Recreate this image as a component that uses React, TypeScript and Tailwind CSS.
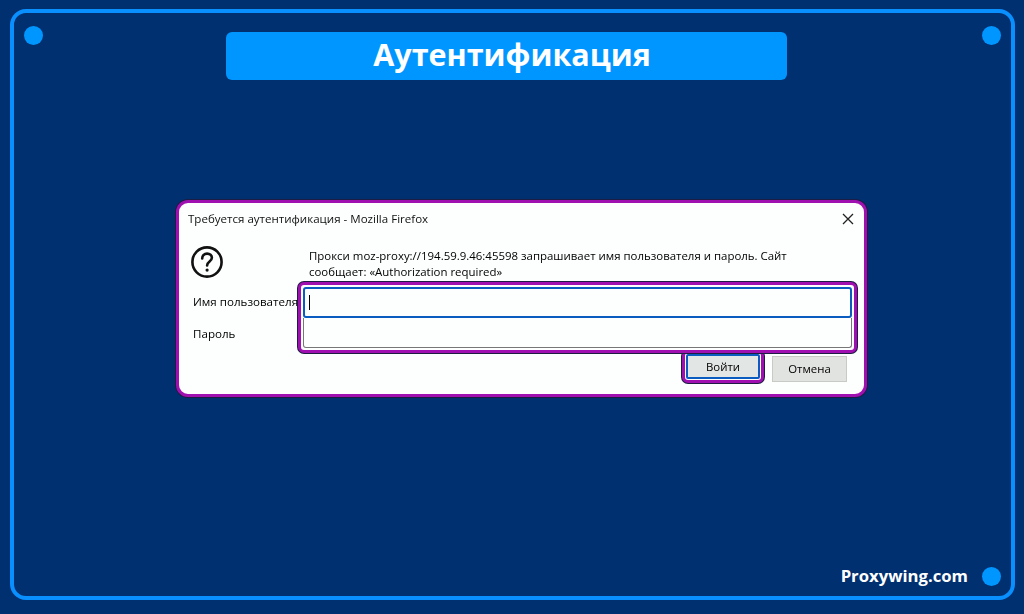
const font = { fontFamily: '"Open Sans", "Noto Sans", sans-serif' };

function Dot() {
  return <span className="block w-[19px] h-[19px] rounded-full bg-[#0096ff] shrink-0" />;
}

function QuestionIcon() {
  return (
    <svg width="34" height="34" viewBox="0 0 34 34" fill="none" stroke="#111" strokeWidth="2.6" strokeLinecap="round">
      <circle cx="17" cy="17" r="14.6" />
      <path d="M12.2 13.4c0-3 2.1-4.8 4.9-4.8s4.8 1.8 4.8 4.2c0 3.6-4.8 3.7-4.8 7.6" fill="none" />
      <path d="M17.1 25v.1" strokeWidth="3.2" />
    </svg>
  );
}

function CloseIcon() {
  return (
    <svg width="12" height="12" viewBox="0 0 12 12" stroke="#222" strokeWidth="1.3" fill="none">
      <path d="M1 1l10 10M11 1L1 11" />
    </svg>
  );
}

export default function App() {
  return (
    <div className="h-[614px] w-[1024px] bg-[#003070] pt-[9px] pl-[10px] overflow-hidden" style={font}>
      <div className="w-[1005px] h-[591px] border-4 border-[#0a8fff] rounded-[16px] px-[10px] flex flex-col">
        <div className="flex justify-between items-start pt-[12.5px]">
          <Dot />
          <div className="w-[561px] h-[48px] mt-[6.5px] mr-[12px] rounded-[6px] bg-[#0096ff] flex items-center justify-center pb-[3px] pl-[11px] text-white font-bold text-[30.5px] leading-none">
            Аутентификация
          </div>
          <Dot />
        </div>

        <div className="ml-[152px] mt-[120px] w-[691px] h-[197px] border-[3px] border-[#a010b0] rounded-[12px] bg-[#fdfefe] shadow-[0_0_0_1px_#1c1c44] flex flex-col text-black blur-[0.35px]">
          <div className="flex items-center justify-between pl-[9px] pr-[10px] h-[31px] text-[11.55px] font-medium text-[#111]">
            <span>Требуется аутентификация - Mozilla Firefox</span>
            <CloseIcon />
          </div>

          <div className="flex pl-[11px] mt-[11px]">
            <QuestionIcon />
            <div className="ml-[85px] mt-[3px] w-[520px] text-[11.45px] leading-[16px] font-medium">
              Прокси moz-proxy://194.59.9.46:45598 запрашивает имя пользователя и пароль. Сайт сообщает: «Authorization required»
            </div>
          </div>

          <div className="flex mt-[2px]">
            <div className="w-[119px] shrink-0 pl-[14px] pt-[12px] text-[11.6px] font-medium leading-[16px]">
              <div className="whitespace-nowrap">Имя пользователя</div>
              <div className="mt-[16px]">Пароль</div>
            </div>
            <div className="w-[559px] h-[71px] border-[3px] border-[#a010b0] rounded-[6px] shadow-[0_0_0_1px_#1c1c44] p-[2px] bg-[#fdfefe] relative">
              <div className="h-[31px] border-2 border-[#0a5cc0] rounded-[3px] flex items-center pl-[4px]">
                <span className="block w-px h-[15px] bg-black" />
              </div>
              <div className="h-[30px] border border-[#777] border-t-0 rounded-b-[3px]" />
            </div>
          </div>

          <div className="flex items-start ml-[503px] mt-[-3px]">
            <div className="w-[82px] h-[33px] border-[3px] border-[#a010b0] rounded-[6px] shadow-[0_0_0_1px_#1c1c44] p-px bg-[#fdfefe]">
              <div className="h-full border-2 border-[#0a5cc0] rounded-[2px] bg-[#e2e6e4] flex items-center justify-center text-[11.4px] font-medium">
                Войти
              </div>
            </div>
            <div className="ml-[8px] mt-[6px] w-[75px] h-[26px] bg-[#e1e3e0] border border-[#c8cac6] flex items-center justify-center text-[11.4px] font-medium">
              Отмена
            </div>
          </div>
        </div>

        <div className="mt-auto flex justify-end items-center gap-[14px] pb-[10px]">
          <span className="text-white font-bold text-[16.7px] leading-none">Proxywing.com</span>
          <Dot />
        </div>
      </div>
    </div>
  );
}
